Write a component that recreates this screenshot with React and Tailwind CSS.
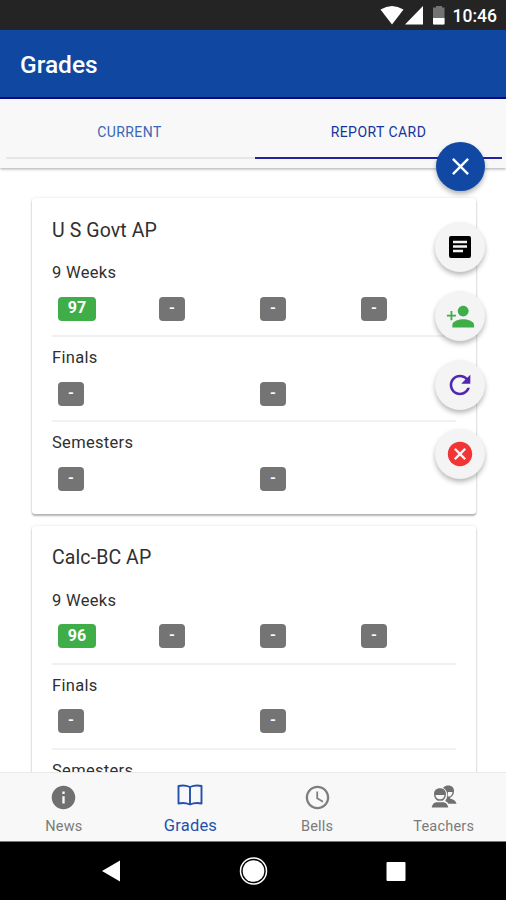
import { IoMdClose, IoMdPersonAdd, IoMdRefresh, IoMdCloseCircle, IoMdInformationCircle, IoMdTime } from 'react-icons/io'

const courses = [
  { name: 'U S Govt AP', weeks: ['97', '-', '-', '-'] },
  { name: 'Calc-BC AP', weeks: ['96', '-', '-', '-'] },
]

function StatusBar() {
  return (
    <div className="flex h-[30px] shrink-0 items-center justify-end bg-[#242424] pr-[9px] text-white">
      <svg width="66" height="22" viewBox="0 0 66 22" className="mr-[7px]">
        <path d="M0.5 5.500Q12 -1.500 23.500 5.500L12 20.500z" fill="#fff" />
        <path d="M43 2v18.500H25z" fill="#fff" />
        <path d="M56 2h6v1.500h2.500v17H53v-17h3z" fill="#737373" />
        <path d="M53 14h11.500v5.500q0 1-1 1h-9.500q-1 0-1-1z" fill="#fff" />
      </svg>
      <span className="pt-[3px] text-[17.5px] leading-none font-medium">10:46</span>
    </div>
  )
}

function Tabs() {
  return (
    <div className="flex h-[69px] shrink-0 bg-[#f8f8f8] pr-[4px] pb-[9px] pl-[6px] text-[14px] shadow-[0_1px_3px_rgba(0,0,0,0.35)]">
      <div className="flex flex-1 items-center justify-center border-b-2 border-[#e7e7e7] pt-[8px] pr-[2px] tracking-[0.4px] text-[#3a66b6]">
        CURRENT
      </div>
      <div className="flex flex-1 items-center justify-center border-b-2 border-[#24249f] pt-[8px] tracking-[0.45px] text-[#14359c]">
        REPORT CARD
      </div>
    </div>
  )
}

function Grade({ value }) {
  if (value === '-') {
    return (
      <span className="flex h-[24px] w-[26px] items-center justify-center rounded-[4px] bg-[#747474] pb-[1px] text-[15px] font-bold text-white">
        -
      </span>
    )
  }
  return (
    <span className="flex h-[24px] w-[38px] items-center justify-center rounded-[4px] bg-[#3fae49] pb-[1px] text-[16px] font-bold text-white">
      {value}
    </span>
  )
}

function Section({ label, grades, last }) {
  return (
    <div className={last ? 'h-[85px] pt-[10px]' : 'h-[85px] border-b-2 border-[#f1f1f1] pt-[10px]'}>
      <div className="h-[34.5px] text-[16.5px] leading-[21px] tracking-[0.3px]">{label}</div>
      <div className="flex pl-[6px]">
        {grades.map((grade, i) => (
          <div key={i} className={grades.length === 4 ? 'w-[101px] shrink-0' : 'w-[202px] shrink-0'}>
            <Grade value={grade} />
          </div>
        ))}
      </div>
    </div>
  )
}

function CourseCard({ course }) {
  return (
    <div className="h-[316px] shrink-0 rounded-[3px] bg-white px-[20px] text-[#303030] shadow-[0_2px_2px_rgba(0,0,0,0.28),0_0_3px_rgba(0,0,0,0.12)]">
      <div className="h-[54px] pt-[20.5px] text-[19.5px] leading-[24px] tracking-[0.1px]">{course.name}</div>
      <Section label="9 Weeks" grades={course.weeks} />
      <Section label="Finals" grades={['-', '-']} />
      <Section label="Semesters" grades={['-', '-']} last />
    </div>
  )
}

function PaperIcon() {
  return (
    <svg width="22" height="22" viewBox="0 0 22 22">
      <rect width="22" height="22" rx="2" fill="#000" />
      <path d="M4 4.800h14v2.400H4zM4 9.300h14v2.400H4zM4 13.800h10v2.400H4z" fill="#f4f4f4" />
    </svg>
  )
}

function FabButton({ children }) {
  return (
    <button className="flex size-[50px] items-center justify-center rounded-full bg-[#f4f4f4] shadow-[0_3px_5px_rgba(0,0,0,0.28)]">
      {children}
    </button>
  )
}

// Floating menu, sits over the tabs and the cards
function FabMenu() {
  return (
    <div className="absolute top-[142px] left-[435px] flex w-[50px] flex-col items-center">
      <button className="mb-[31px] flex size-[49px] items-center justify-center rounded-full bg-[#1048a4] text-white shadow-[0_3px_5px_rgba(0,0,0,0.3)]">
        <IoMdClose size={29} />
      </button>
      <div className="flex flex-col gap-[19px]">
        <FabButton><PaperIcon /></FabButton>
        <FabButton><IoMdPersonAdd size={29} color="#3fae49" /></FabButton>
        <FabButton><IoMdRefresh size={30} color="#5127b0" /></FabButton>
        <FabButton><IoMdCloseCircle size={30} color="#f23434" /></FabButton>
      </div>
    </div>
  )
}

function BookIcon() {
  return (
    <svg width="26" height="22" viewBox="0 0 26 22" fill="none" stroke="#2450ad" strokeWidth="1.900" strokeLinejoin="round">
      <path d="M13 3Q7.500 0.500 1.500 2v17.500Q7.500 18 13 20.500Q18.500 18 24.500 19.500V2Q18.500 0.500 13 3zM13 3v17" />
    </svg>
  )
}

function TeachersIcon() {
  return (
    <svg width="26" height="24" viewBox="0 0 26 24" fill="#707070">
      {/* person behind */}
      <path d="M12 3C13.500 1 15.500 .500 17.500 .500c3.500 0 5.500 2.300 5.500 5.500 0 3.300-1.300 5.500-3.800 6.500v1.200c3 .6 5.300 1.500 6.300 5h-8c-1-1.300-2-2-3.300-2.600l1.600-3.100C17 9 16 5 12 3z" />
      <path d="M17 7h4.500c-.2 2.300-1.200 4-3.200 4.500-1 .2-1.500-.300-1.500-1z" fill="#f8f8f8" />
      {/* person in front */}
      <path d="M9 3.300c3.800 0 6 2.300 6 5.700 0 3.300-1.500 5.500-3.300 6.500v1.200c3 .700 4.800 2 5.600 5.800H.700c.8-3.800 2.600-5.100 5.600-5.800v-1.200C4.500 14.500 3 12.300 3 9c0-3.400 2.200-5.700 6-5.700z" />
      <path d="M4.500 10h9c-.3 2.800-2 4.300-4.500 4.300S4.800 12.800 4.500 10z" fill="#f8f8f8" />
      <path d="M2.500 17.300 6 15.800h6l3.500 1.500z" fill="#f8f8f8" />
    </svg>
  )
}

function NavItem({ icon, label, active }) {
  return (
    <div className="flex flex-1 flex-col items-center">
      <div className="flex h-[26px] items-center">{icon}</div>
      <div className={active
        ? 'mt-[5.5px] text-[16.5px] leading-[20px] tracking-[0.2px] text-[#2450ad]'
        : 'mt-[8px] text-[14.5px] leading-[18px] tracking-[0.2px] text-[#7b7b7b]'}
      >
        {label}
      </div>
    </div>
  )
}

function BottomTabs() {
  return (
    <div className="flex h-[70px] shrink-0 border-t border-b border-t-[#e9e9e9] border-b-[#777] bg-[#f8f8f8] pt-[11px]">
      <div className="-mr-[1px] ml-[0.5px] flex flex-1">
        <NavItem icon={<IoMdInformationCircle size={29} color="#707070" />} label="News" />
        <NavItem icon={<div className="pb-[4px]"><BookIcon /></div>} label="Grades" active />
        <NavItem icon={<IoMdTime size={29} color="#707070" />} label="Bells" />
        <NavItem icon={<TeachersIcon />} label="Teachers" />
      </div>
    </div>
  )
}

function SystemNav() {
  return (
    <div className="flex flex-1 items-center justify-center bg-black">
      <svg width="308" height="30" viewBox="0 0 308 30" fill="#fff">
        <path d="M21 4.500v21L3 15z" />
        <circle cx="154.500" cy="15" r="10.800" />
        <circle cx="154.500" cy="15" r="13" fill="none" stroke="#fff" strokeWidth="1.500" />
        <rect x="287.500" y="6" width="19" height="19" rx="1" />
      </svg>
    </div>
  )
}

export default function App() {
  return (
    <div className="relative flex h-[900px] w-[506px] flex-col overflow-hidden bg-white font-['Roboto',sans-serif]">
      <StatusBar />
      <header className="flex h-[69px] shrink-0 items-center border-b-2 border-[#09098e] bg-[#1048a1] pl-[20px] text-[24.5px] font-medium text-white">
        <h1 className="pt-[4px]">Grades</h1>
      </header>
      <Tabs />
      <main className="flex h-[604px] shrink-0 flex-col gap-[11.5px] overflow-hidden px-[32px] pt-[30px] pr-[30px]">
        {courses.map(course => <CourseCard key={course.name} course={course} />)}
      </main>
      <BottomTabs />
      <SystemNav />
      <FabMenu />
    </div>
  )
}
